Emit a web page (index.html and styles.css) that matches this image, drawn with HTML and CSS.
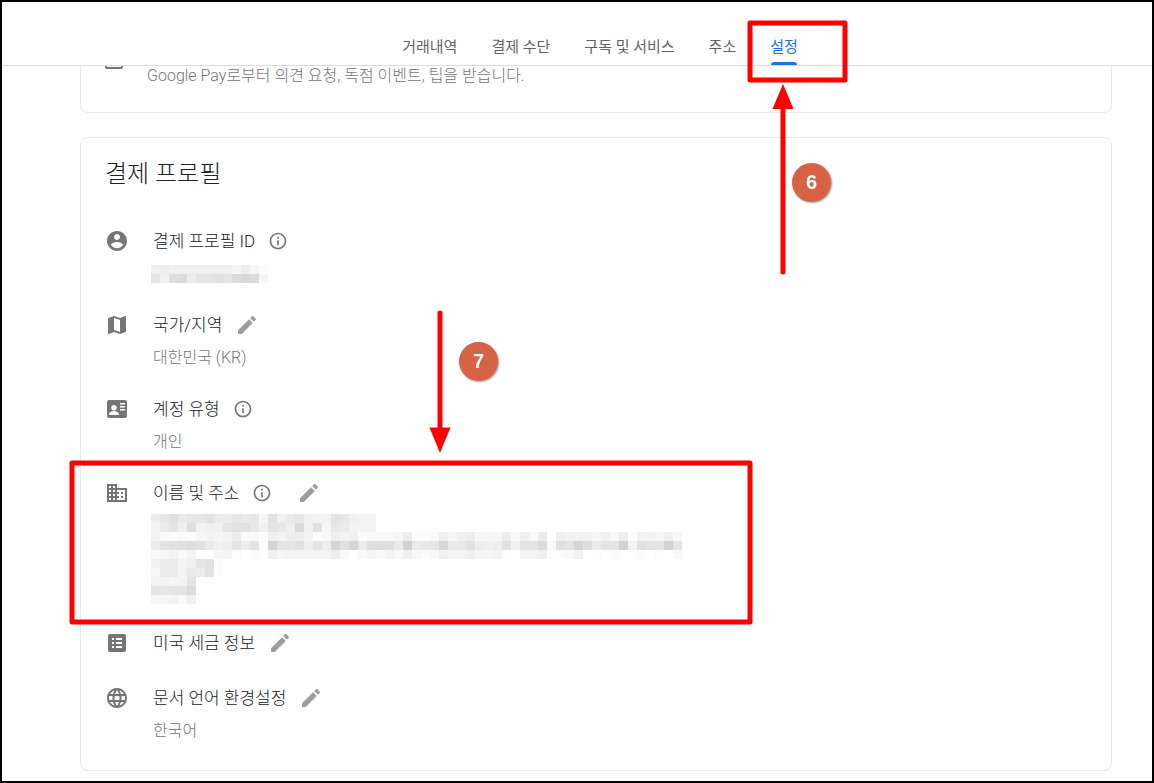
FILE: index.html
```html
<!DOCTYPE html>
<html lang="ko">
<head>
  <meta charset="UTF-8">
  <meta name="viewport" content="width=device-width, initial-scale=1">
  <title>결제 프로필</title>
  <link rel="stylesheet" href="styles.css">
</head>
<body>
  <header class="topbar">
    <nav class="tabs">
      <a href="#">거래내역</a>
      <a href="#">결제 수단</a>
      <a href="#">구독 및 서비스</a>
      <a href="#">주소</a>
      <a href="#" class="active">설정</a>
    </nav>
  </header>

  <main class="content">
    <section class="card optin">
      <input type="checkbox" id="optin">
      <label for="optin">Google Pay로부터 의견 요청, 독점 이벤트, 팁을 받습니다.</label>
    </section>

    <section class="card profile">
      <h2>결제 프로필</h2>

      <div class="row">
        <svg class="icon" viewBox="0 0 24 24"><path d="M12 2C6.48 2 2 6.48 2 12s4.48 10 10 10 10-4.48 10-10S17.52 2 12 2zm0 3c1.66 0 3 1.34 3 3s-1.34 3-3 3-3-1.34-3-3 1.34-3 3-3zm0 14.2c-2.5 0-4.71-1.28-6-3.22.03-1.99 4-3.08 6-3.08 1.99 0 5.97 1.09 6 3.08-1.29 1.94-3.5 3.22-6 3.22z"/></svg>
        <div class="info">
          <div class="name">
            <h3>결제 프로필 ID</h3>
            <button type="button" class="help" aria-label="정보"><svg viewBox="0 0 24 24"><path d="M11 7h2v2h-2zm0 4h2v6h-2zm1-9C6.48 2 2 6.48 2 12s4.48 10 10 10 10-4.48 10-10S17.52 2 12 2zm0 18c-4.41 0-8-3.59-8-8s3.59-8 8-8 8 3.59 8 8-3.59 8-8 8z"/></svg></button>
          </div>
          <div class="value">
            <svg class="mosaic" data-rows="5655555553631 95bc699a9cdc3"></svg>
          </div>
        </div>
      </div>

      <div class="row">
        <svg class="icon" viewBox="0 0 24 24"><path d="M20.5 3l-.16.03L15 5.1 9 3 3.36 4.9c-.21.07-.36.25-.36.48V20.5c0 .28.22.5.5.5l.16-.03L9 18.9l6 2.1 5.64-1.9c.21-.07.36-.25.36-.48V3.5c0-.28-.22-.5-.5-.5zM15 19l-6-2.11V5l6 2.11V19z"/></svg>
        <div class="info">
          <div class="name">
            <h3>국가/지역</h3>
            <button type="button" class="edit" aria-label="수정"><svg viewBox="0 0 24 24"><path d="M3 17.25V21h3.75L17.81 9.94l-3.75-3.75L3 17.25zM20.71 7.04c.39-.39.39-1.02 0-1.41l-2.34-2.34c-.39-.39-1.02-.39-1.41 0l-1.83 1.83 3.75 3.75 1.83-1.83z"/></svg></button>
          </div>
          <div class="value">대한민국 (KR)</div>
        </div>
      </div>

      <div class="row">
        <svg class="icon" viewBox="0 0 24 24"><path fill-rule="evenodd" d="M4 3h16a2 2 0 0 1 2 2v14a2 2 0 0 1-2 2H4a2 2 0 0 1-2-2V5a2 2 0 0 1 2-2zM9 8a2.7 2.7 0 1 0 0 5.4A2.7 2.7 0 0 0 9 8zM4 18h10v-1c0-2-3.3-3.1-5-3.1S4 15 4 17zM15 6v1.5h5V6zm0 3v1.5h5V9zm0 3v1.5h5V12z"/></svg>
        <div class="info">
          <div class="name">
            <h3>계정 유형</h3>
            <button type="button" class="help" aria-label="정보"><svg viewBox="0 0 24 24"><path d="M11 7h2v2h-2zm0 4h2v6h-2zm1-9C6.48 2 2 6.48 2 12s4.48 10 10 10 10-4.48 10-10S17.52 2 12 2zm0 18c-4.41 0-8-3.59-8-8s3.59-8 8-8 8 3.59 8 8-3.59 8-8 8z"/></svg></button>
          </div>
          <div class="value">개인</div>
        </div>
      </div>

      <div class="row">
        <svg class="icon" viewBox="0 0 24 24"><path d="M12 7V3H2v18h20V7H12zM6 19H4v-2h2v2zm0-4H4v-2h2v2zm0-4H4V9h2v2zm0-4H4V5h2v2zm4 12H8v-2h2v2zm0-4H8v-2h2v2zm0-4H8V9h2v2zm0-4H8V5h2v2zm10 12h-8v-2h2v-2h-2v-2h2v-2h-2V9h8v10zm-2-8h-2v2h2v-2zm0 4h-2v2h2v-2z"/></svg>
        <div class="info">
          <div class="name">
            <h3>이름 및 주소</h3>
            <button type="button" class="help" aria-label="정보"><svg viewBox="0 0 24 24"><path d="M11 7h2v2h-2zm0 4h2v6h-2zm1-9C6.48 2 2 6.48 2 12s4.48 10 10 10 10-4.48 10-10S17.52 2 12 2zm0 18c-4.41 0-8-3.59-8-8s3.59-8 8-8 8 3.59 8 8-3.59 8-8 8z"/></svg></button>
            <button type="button" class="edit" aria-label="수정"><svg viewBox="0 0 24 24"><path d="M3 17.25V21h3.75L17.81 9.94l-3.75-3.75L3 17.25zM20.71 7.04c.39-.39.39-1.02 0-1.41l-2.34-2.34c-.39-.39-1.02-.39-1.41 0l-1.83 1.83 3.75 3.75 1.83-1.83z"/></svg></button>
          </div>
          <div class="value">
            <svg class="mosaic" data-rows="68a7889768783a57854498544 4795b4559aa85985c5a387444 42121343462215466412545122236112535633362527054443536144353 79aaba7569691e99a696eae7bbb7f788e78a656a599c2a9eb799f4a99f9 23424003410105344444620232425212534533410445112501010010102 577459a1 37747691 44349 9899c 33425"></svg>
          </div>
        </div>
      </div>

      <div class="row">
        <svg class="icon" viewBox="0 0 24 24"><path fill-rule="evenodd" d="M5 3h14a2 2 0 0 1 2 2v14a2 2 0 0 1-2 2H5a2 2 0 0 1-2-2V5a2 2 0 0 1 2-2zM7 7v2h2V7zm4 0v2h6V7zm-4 4v2h2v-2zm4 0v2h6v-2zm-4 4v2h2v-2zm4 0v2h6v-2z"/></svg>
        <div class="info">
          <div class="name">
            <h3>미국 세금 정보</h3>
            <button type="button" class="edit" aria-label="수정"><svg viewBox="0 0 24 24"><path d="M3 17.25V21h3.75L17.81 9.94l-3.75-3.75L3 17.25zM20.71 7.04c.39-.39.39-1.02 0-1.41l-2.34-2.34c-.39-.39-1.02-.39-1.41 0l-1.83 1.83 3.75 3.75 1.83-1.83z"/></svg></button>
          </div>
        </div>
      </div>

      <div class="row">
        <svg class="icon" viewBox="0 0 24 24"><path d="M11.99 2C6.47 2 2 6.48 2 12s4.47 10 9.99 10C17.52 22 22 17.52 22 12S17.52 2 11.99 2zm6.93 6h-2.95c-.32-1.25-.78-2.45-1.38-3.56 1.84.63 3.37 1.91 4.33 3.56zM12 4.04c.83 1.2 1.48 2.53 1.91 3.96h-3.82c.43-1.43 1.08-2.76 1.91-3.96zM4.26 14C4.1 13.36 4 12.69 4 12s.1-1.36.26-2h3.38c-.08.66-.14 1.32-.14 2s.06 1.34.14 2H4.26zm.82 2h2.95c.32 1.25.78 2.45 1.38 3.56-1.84-.63-3.37-1.9-4.33-3.56zm2.95-8H5.08c.96-1.66 2.49-2.93 4.33-3.56C8.81 5.55 8.35 6.75 8.03 8zM12 19.96c-.83-1.2-1.48-2.53-1.91-3.96h3.82c-.43 1.43-1.08 2.76-1.91 3.96zM14.34 14H9.66c-.09-.66-.16-1.32-.16-2s.07-1.35.16-2h4.68c.09.65.16 1.32.16 2s-.07 1.34-.16 2zm.25 5.56c.6-1.11 1.06-2.31 1.38-3.56h2.95c-.96 1.65-2.49 2.93-4.33 3.56zM16.36 14c.08-.66.14-1.32.14-2s-.06-1.34-.14-2h3.38c.16.64.26 1.31.26 2s-.1 1.36-.26 2h-3.38z"/></svg>
        <div class="info">
          <div class="name">
            <h3>문서 언어 환경설정</h3>
            <button type="button" class="edit" aria-label="수정"><svg viewBox="0 0 24 24"><path d="M3 17.25V21h3.75L17.81 9.94l-3.75-3.75L3 17.25zM20.71 7.04c.39-.39.39-1.02 0-1.41l-2.34-2.34c-.39-.39-1.02-.39-1.41 0l-1.83 1.83 3.75 3.75 1.83-1.83z"/></svg></button>
          </div>
          <div class="value">한국어</div>
        </div>
      </div>
    </section>
  </main>

  <!-- step marks over the page -->
  <svg class="marks" width="1154" height="783">
    <rect x="750" y="23" width="95" height="57"/>
    <rect x="72" y="463" width="678" height="159"/>
    <path d="M783 106V272M440 313V430"/>
    <path class="head" d="M783 84l10.5 25h-21zM440 453l10.5-25.5h-21z"/>
  </svg>
  <span class="step step-6">6</span>
  <span class="step step-7">7</span>

  <script src="mosaic.js"></script>
</body>
</html>
```
FILE: styles.css
```css
* {
  box-sizing: border-box;
}

body {
  margin: 0;
  min-height: 100vh;
  position: relative;
  border: 2px solid #000;
  background: #fefefe;
  color: #202124;
  font-family: Roboto, "Noto Sans CJK KR", sans-serif;
  font-weight: 300;
}

h2,
h3 {
  margin: 0;
  font-weight: 300;
}

/* header */
.topbar {
  position: sticky;
  top: 0;
  z-index: 1;
  height: 64px;
  display: flex;
  align-items: flex-end;
  justify-content: center;
  padding-left: 46px;
  border-bottom: 1px solid #dadce0;
  background: #fff;
}

.tabs {
  display: flex;
  gap: 34px;
}

.tabs a {
  color: #5f6368;
  font-size: 15px;
  font-weight: 400;
  line-height: 20px;
  text-decoration: none;
}

.tabs a::after {
  content: "";
  display: block;
  height: 3px;
  margin: 5px 1px 0;
  border-radius: 3px 3px 0 0;
}

.tabs .active {
  color: #1a73e8;
}

.tabs .active::after {
  background: #1a73e8;
}

/* cards */
.content {
  padding: 0 40px 10px 78px;
}

.card {
  border: 1px solid #e8eaed;
  border-radius: 8px;
  background: #fff;
}

.optin {
  display: flex;
  gap: 24px;
  margin-top: -40px;
  margin-bottom: 24px;
  padding: 24px 24px 23px;
}

.optin input {
  appearance: none;
  flex: none;
  width: 18px;
  height: 18px;
  margin: 0;
  border: 2px solid #757575;
  border-radius: 2px;
}

.optin label {
  padding-top: 12px;
  color: #757575;
  font-size: 16px;
  line-height: 26px;
}

.profile {
  padding: 20px 24px 27px;
}

.profile h2 {
  margin-bottom: 39px;
  font-size: 24px;
  line-height: 32px;
}

.row {
  display: flex;
  gap: 24px;
  min-height: 28px;
}

.row + .row {
  margin-top: 27px;
}

.icon {
  flex: none;
  width: 24px;
  height: 24px;
  fill: #757575;
}

.name {
  display: flex;
  align-items: center;
  gap: 13px;
  height: 24px;
}

.name h3 {
  font-size: 17px;
  line-height: 24px;
}

.name button {
  display: flex;
  padding: 0;
  border: 0;
  background: none;
  cursor: pointer;
}

.help svg {
  width: 20px;
  height: 20px;
  fill: #757575;
}

.edit svg {
  width: 24px;
  height: 24px;
  fill: #9e9e9e;
}

.help + .edit {
  margin-left: 12px;
}

.value {
  display: flex;
  align-items: center;
  min-height: 24px;
  margin-top: 9px;
  color: #757575;
  font-size: 16px;
  line-height: 24px;
}

.mosaic {
  margin-left: -2px;
}

/* step marks */
.marks {
  position: absolute;
  top: -2px;
  left: -2px;
  z-index: 2;
  fill: none;
  stroke: #f00;
  stroke-width: 5;
  stroke-linecap: round;
  stroke-linejoin: round;
  pointer-events: none;
}

.marks .head {
  fill: #f00;
  stroke: none;
}

.step {
  position: absolute;
  z-index: 2;
  width: 39px;
  height: 39px;
  border-radius: 50%;
  background: #d86344;
  box-shadow: 1px 1px 2px rgba(0, 0, 0, 0.4);
  color: #fff;
  font: bold 20px/39px "Liberation Sans", sans-serif;
  text-align: center;
}

.step-6 {
  top: 161px;
  left: 790px;
}

.step-7 {
  top: 340px;
  left: 457px;
}
```
FILE: mosaic.js
```js
// each hex digit is one grey cell, 0 is white
const CELL = 9;

document.querySelectorAll(".mosaic").forEach((svg) => {
  const rows = svg.dataset.rows.split(" ");
  const cols = Math.max(...rows.map((r) => r.length));
  svg.setAttribute("width", cols * CELL);
  svg.setAttribute("height", rows.length * CELL);

  rows.forEach((row, y) => {
    [...row].forEach((digit, x) => {
      const grey = 255 - parseInt(digit, 16) * 3;
      const rect = document.createElementNS("http://www.w3.org/2000/svg", "rect");
      rect.setAttribute("x", x * CELL);
      rect.setAttribute("y", y * CELL);
      rect.setAttribute("width", CELL);
      rect.setAttribute("height", CELL);
      rect.setAttribute("fill", `rgb(${grey}, ${grey}, ${grey})`);
      svg.appendChild(rect);
    });
  });
});
```
